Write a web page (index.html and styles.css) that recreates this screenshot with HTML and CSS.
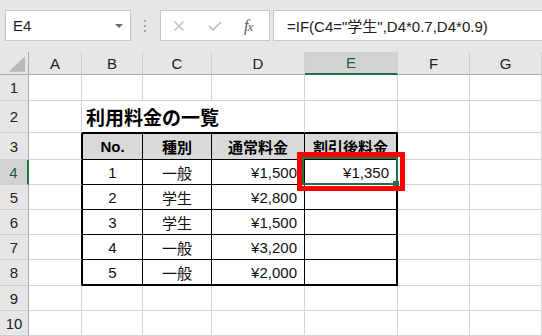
FILE: index.html
```html
<!DOCTYPE html>
<html lang="ja">
<head>
    <meta charset="UTF-8">
    <title>利用料金の一覧</title>
    <link rel="stylesheet" href="styles.css">
</head>
<body>

    <div class="toolbar">
        <div class="namebox"><span>E4</span><span class="caret"></span></div>
        <div class="grip"><i></i><i></i><i></i></div>
        <div class="tools">
            <svg class="ico" width="12" height="10" viewBox="0 0 12 10"><path d="M1.5 0.5 L10.5 9.5 M10.5 0.5 L1.5 9.5" stroke="#c4c4c4" stroke-width="1.6" fill="none"/></svg>
            <svg class="ico" width="14" height="10" viewBox="0 0 14 10"><path d="M1 5 L5 9 L13 1" stroke="#c4c4c4" stroke-width="1.8" fill="none"/></svg>
            <span class="fx"><i>f</i><i class="sub">x</i></span>
        </div>
        <div class="formula">=IF(C4="学生",D4*0.7,D4*0.9)</div>
    </div>

    <div class="sheet">
        <div class="corner"><svg width="29" height="23" viewBox="0 0 29 23"><polygon points="26,4 26,20 9,20" fill="#b9b9b9"/></svg></div>
        <div class="ch">A</div>
        <div class="ch">B</div>
        <div class="ch">C</div>
        <div class="ch">D</div>
        <div class="ch on">E</div>
        <div class="ch">F</div>
        <div class="ch">G</div>

        <div class="rh">1</div>
        <div class="c"></div><div class="c"></div><div class="c"></div><div class="c"></div><div class="c"></div><div class="c"></div><div class="c"></div>

        <div class="rh">2</div>
        <div class="c"></div>
        <div class="c top title">利用料金の一覧</div>
        <div class="c top"></div>
        <div class="c"></div><div class="c"></div>

        <div class="rh">3</div>
        <div class="c edge"></div>
        <div class="c t hd l">No.</div>
        <div class="c t hd">種別</div>
        <div class="c t hd">通常料金</div>
        <div class="c t hd r">割引後料金</div>
        <div class="c"></div><div class="c"></div>

        <div class="rh on">4</div>
        <div class="c edge"></div>
        <div class="c t l ctr">1</div>
        <div class="c t ctr">一般</div>
        <div class="c t num">¥1,500</div>
        <div class="c t r num active">¥1,350
            <span class="sel"></span><span class="handle"></span><span class="mark"></span>
        </div>
        <div class="c"></div><div class="c"></div>

        <div class="rh">5</div>
        <div class="c edge"></div>
        <div class="c t l ctr">2</div>
        <div class="c t ctr">学生</div>
        <div class="c t num">¥2,800</div>
        <div class="c t r num"></div>
        <div class="c"></div><div class="c"></div>

        <div class="rh">6</div>
        <div class="c edge"></div>
        <div class="c t l ctr">3</div>
        <div class="c t ctr">学生</div>
        <div class="c t num">¥1,500</div>
        <div class="c t r num"></div>
        <div class="c"></div><div class="c"></div>

        <div class="rh">7</div>
        <div class="c edge"></div>
        <div class="c t l ctr">4</div>
        <div class="c t ctr">一般</div>
        <div class="c t num">¥3,200</div>
        <div class="c t r num"></div>
        <div class="c"></div><div class="c"></div>

        <div class="rh">8</div>
        <div class="c edge"></div>
        <div class="c t l b ctr">5</div>
        <div class="c t b ctr">一般</div>
        <div class="c t b num">¥2,000</div>
        <div class="c t r b num"></div>
        <div class="c"></div><div class="c"></div>

        <div class="rh">9</div>
        <div class="c"></div><div class="c"></div><div class="c"></div><div class="c"></div><div class="c"></div><div class="c"></div><div class="c"></div>

        <div class="rh">10</div>
        <div class="c"></div><div class="c"></div><div class="c"></div><div class="c"></div><div class="c"></div><div class="c"></div><div class="c"></div>
    </div>

</body>
</html>
```

FILE: styles.css
```css
body {
    margin: 0;
    background-color: #e6e6e6;
    font-family: "Liberation Sans", "Noto Sans CJK JP", sans-serif;
    color: #1e1e1e;
    overflow: hidden;
}

.toolbar {
    display: flex;
    align-items: flex-start;
    height: 52px;
    padding: 10px 0 0 5px;
    box-sizing: border-box;
}

.namebox,
.tools,
.formula {
    display: flex;
    align-items: center;
    height: 31px;
    box-sizing: border-box;
    background: #fff;
    border: 1px solid #c6c6c6;
    font-size: 15px;
}

.namebox {
    width: 126px;
    padding: 0 7px;
}

.caret {
    margin-left: auto;
    border-left: 4px solid transparent;
    border-right: 4px solid transparent;
    border-top: 4px solid #6a6a6a;
}

.grip {
    display: flex;
    flex-direction: column;
    gap: 3px;
    width: 2px;
    margin: 10px 14px 0 13px;
}

.grip i {
    width: 2px;
    height: 2px;
    background: #a6a6a6;
}

.tools {
    width: 110px;
    padding: 0 0 0 12px;
}

.tools .ico {
    margin-right: 23px;
}

.tools .ico + .ico {
    margin-right: 22px;
}

.fx {
    font-family: "Liberation Serif", serif;
    color: #5a5a5a;
    font-size: 16px;
    letter-spacing: -1px;
}

.fx i {
    font-style: italic;
}

.fx .sub {
    font-size: 13px;
}

.formula {
    flex: 1;
    margin-left: 3px;
    padding-left: 13px;
    border-right: none;
    color: #222;
    white-space: nowrap;
}

.sheet {
    display: grid;
    grid-template-columns: 29px 53px 61px 69px 93px 93px 72px 72px;
    grid-template-rows: 23px 26px 32px 27px 25px 25px 25px 25px 26px 25px 25px;
    background: #fff;
    font-size: 15px;
}

.corner,
.ch,
.rh {
    background: #e6e6e6;
    box-sizing: border-box;
    display: flex;
    align-items: center;
    justify-content: center;
    color: #222;
}

.corner {
    border-right: 1px solid #ababab;
    border-bottom: 1px solid #ababab;
}

.ch {
    border-right: 1px solid #cfcfcf;
    border-bottom: 1px solid #ababab;
}

.ch.on {
    background: #d2d2d2;
    color: #1d5b3a;
    border-bottom: 2px solid #217346;
}

.rh {
    border-right: 1px solid #ababab;
    border-bottom: 1px solid #cfcfcf;
}

.rh.on {
    background: #d2d2d2;
    color: #1d5b3a;
    border-right: 2px solid #217346;
}

.c {
    display: flex;
    align-items: center;
    box-sizing: border-box;
    padding: 0 7px;
    border-right: 1px solid #d4d4d4;
    border-bottom: 1px solid #d4d4d4;
    white-space: nowrap;
    color: #111;
}

.title {
    grid-column: span 3;
    padding-left: 4px;
    font-size: 19px;
    font-weight: bold;
    font-family: "Noto Sans CJK JP", sans-serif;
    color: #000;
}

.top {
    border-bottom-color: #000;
}

.edge {
    border-right-color: #000;
}

.t {
    border-right-color: #000;
    border-bottom-color: #000;
}

.hd {
    justify-content: center;
    background: #d9d9d9;
    font-weight: bold;
    border-top: 1px solid #000;
    color: #000;
}

.l {
    border-left: 1px solid #000;
}

.r {
    border-right-width: 2px;
}

.b {
    border-bottom-width: 2px;
}

.ctr {
    justify-content: center;
}

.num {
    justify-content: flex-end;
}

.active {
    position: relative;
}

.sel {
    position: absolute;
    top: -3px;
    left: -3px;
    right: -2px;
    bottom: -1px;
    border: 2px solid #217346;
}

.handle {
    position: absolute;
    right: -3px;
    bottom: -3px;
    width: 6px;
    height: 6px;
    background: #217346;
}

.mark {
    position: absolute;
    top: -8px;
    left: -8px;
    right: -9px;
    bottom: -7px;
    border: 5px solid #ff0000;
}
```
